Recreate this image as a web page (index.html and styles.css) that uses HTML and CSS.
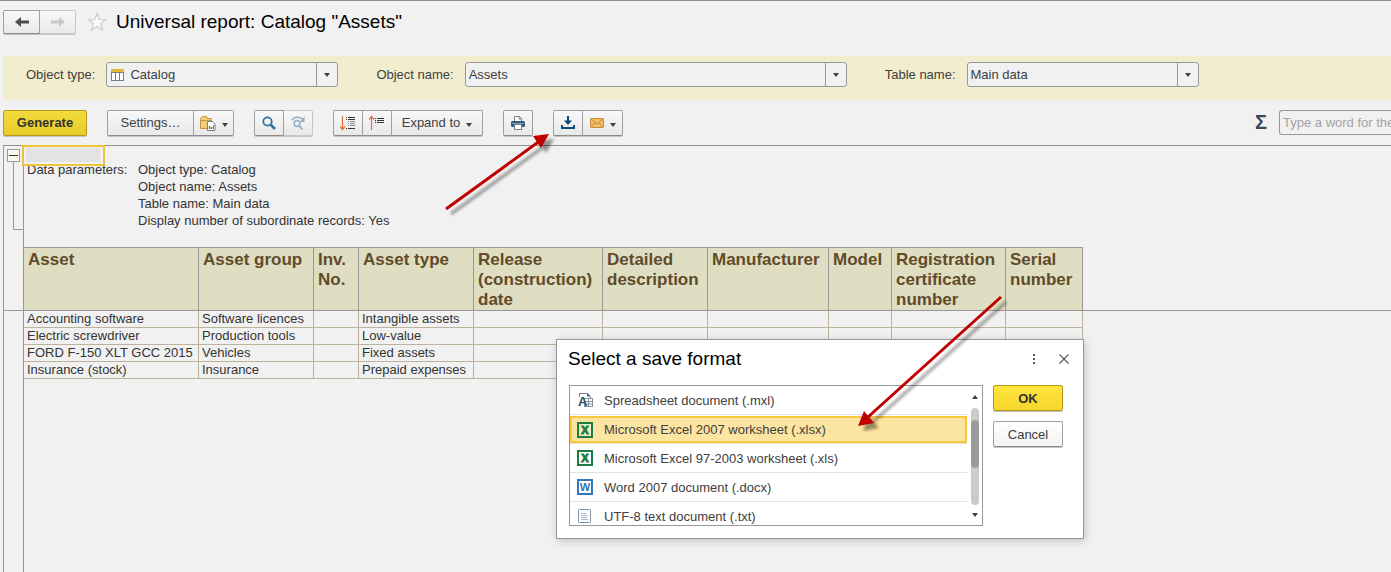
FILE: index.html
```html
<!DOCTYPE html>
<html lang="en">
<head>
    <meta charset="UTF-8">
    <meta name="viewport" content="width=device-width, initial-scale=1.0">
    <link rel="stylesheet" href="styles.css">
    <title>Universal report: Catalog "Assets"</title>
</head>
<body>
    <header class="title-bar">
        <div class="btn-group">
            <button class="btn nav-btn" type="button" aria-label="Back">
                <svg width="14" height="10" viewBox="0 0 14 10"><path d="M6 0v3.6h8v2.8H6V10L0 5z" fill="#4d4d4d"/></svg>
            </button>
            <button class="btn nav-btn" type="button" aria-label="Forward" disabled>
                <svg width="14" height="10" viewBox="0 0 14 10"><path d="M8 0v3.6H0v2.8h8V10l6-5z" fill="#c8c8c8"/></svg>
            </button>
        </div>
        <svg class="star" width="20" height="20" viewBox="0 0 20 20"><path d="M10 1.5l2.3 6.1 6.4.2-5.1 4 1.8 6.4-5.4-3.7-5.4 3.7 1.8-6.4-5.1-4 6.4-.2z" fill="#fafafa" stroke="#cfcfcf" stroke-width="1.3"/></svg>
        <h1>Universal report: Catalog "Assets"</h1>
    </header>

    <form class="filters">
        <div class="field">
            <label for="object-type">Object type:</label>
            <div class="combo has-icon">
                <select id="object-type"><option>Catalog</option></select>
                <svg class="combo-icon" width="13" height="12" viewBox="0 0 13 12">
                    <rect x=".5" y=".5" width="12" height="11" fill="#fff" stroke="#6f7f8c"/>
                    <rect x="0" y="0" width="13" height="3" fill="#e3b93c"/>
                    <path d="M4.5 3v9M8.5 3v9M0 3.500h13" stroke="#6f7f8c"/>
                </svg>
                <span class="combo-arrow"><i class="caret"></i></span>
            </div>
        </div>
        <div class="field">
            <label for="object-name">Object name:</label>
            <div class="combo wide">
                <select id="object-name"><option>Assets</option></select>
                <span class="combo-arrow"><i class="caret"></i></span>
            </div>
        </div>
        <div class="field">
            <label for="table-name">Table name:</label>
            <div class="combo">
                <select id="table-name"><option>Main data</option></select>
                <span class="combo-arrow"><i class="caret"></i></span>
            </div>
        </div>
    </form>

    <div class="toolbar">
        <button class="btn primary generate" type="button">Generate</button>
        <div class="btn-group">
            <button class="btn settings" type="button">Settings…</button>
            <button class="btn split" type="button" aria-label="Report variants">
                <svg width="17" height="16" viewBox="0 0 17 16">
                    <path d="M1.500 13.500v-10l2-2h4l1 2h4v10z" fill="#f0cc7c" stroke="#c8963c"/>
                    <path d="M1.500 5.500h11" stroke="#c8963c"/>
                    <path d="M8.500 6.500h5l2.500 2.500v6.500H8.500z" fill="#fff" stroke="#71808d"/>
                    <path d="M10.500 14v-3" stroke="#3a9b4a" stroke-width="1.500"/>
                    <path d="M12.500 14v-2" stroke="#d9482b" stroke-width="1.500"/>
                    <path d="M14.300 14v-4" stroke="#d9482b"/>
                </svg>
                <i class="caret"></i>
            </button>
        </div>
        <div class="btn-group">
            <button class="btn icon-btn" type="button" aria-label="Find">
                <svg width="14" height="14" viewBox="0 0 14 14"><circle cx="5.500" cy="5.500" r="4.200" fill="none" stroke="#31709f" stroke-width="1.800"/><path d="M8.500 8.500l4.500 4.500" stroke="#31709f" stroke-width="2.600"/></svg>
            </button>
            <button class="btn icon-btn" type="button" aria-label="Find next" disabled>
                <svg width="15" height="14" viewBox="0 0 15 14"><circle cx="6" cy="7.500" r="2.900" fill="none" stroke="#8fb0c6" stroke-width="1.500"/><path d="M8 9.500l3.500 4" stroke="#8fb0c6" stroke-width="1.800"/><path d="M1 4C3 .7 8.500.4 11 3" fill="none" stroke="#8fb0c6" stroke-width="1.600"/><path d="M13.500.5v5.500H8.500z" fill="#8fb0c6"/></svg>
            </button>
        </div>
        <div class="btn-group">
            <button class="btn icon-btn" type="button" aria-label="Expand groups">
                <svg width="16" height="16" viewBox="0 0 16 16"><path d="M2.500 1v13M0 11.500l2.500 3 2.500-3" fill="none" stroke="#e2703f" stroke-width="1.200"/><path d="M6 2.500h1M8 2.500h7M6 4.500h1M8 4.500h7M6 13.500h1M8 13.500h7" stroke="#333"/><path d="M8 6.500h1M10 6.500h5M8 8.500h1M10 8.500h5M8 10.500h1M10 10.500h5" stroke="#888"/></svg>
            </button>
            <button class="btn icon-btn" type="button" aria-label="Collapse groups">
                <svg width="16" height="16" viewBox="0 0 16 16"><path d="M2.500 15V2M0 4.500l2.500-3 2.500 3" fill="none" stroke="#e2703f" stroke-width="1.200"/><path d="M6 3.500h1M8 3.500h7M6 5.500h1M8 5.500h7M6 7.500h1M8 7.500h7" stroke="#333"/></svg>
            </button>
            <button class="btn expand" type="button">Expand to <i class="caret"></i></button>
        </div>
        <button class="btn icon-btn" type="button" aria-label="Print">
            <svg width="14" height="14" viewBox="0 0 14 14"><path d="M3.500 6V.5h5l2 2V6" fill="#fff" stroke="#71808d"/><path d="M8 .5v2.500h2.500" fill="none" stroke="#71808d"/><rect x="0" y="5" width="14" height="6" rx="1.500" fill="#33597c"/><path d="M1 7.500h12" stroke="#7fa0bd"/><rect x="3.500" y="8.500" width="7" height="5" fill="#fff" stroke="#71808d"/></svg>
        </button>
        <div class="btn-group">
            <button class="btn icon-btn" type="button" aria-label="Save">
                <svg width="14" height="13" viewBox="0 0 14 13"><path d="M7 0v6" stroke="#0b4b7c" stroke-width="2"/><path d="M3 4.500h8L7 9z" fill="#0b4b7c"/><path d="M1 9v3h12V9" fill="none" stroke="#0b4b7c" stroke-width="2"/></svg>
            </button>
            <button class="btn split" type="button" aria-label="Send">
                <svg width="14" height="10" viewBox="0 0 14 10"><rect x=".5" y=".5" width="13" height="9" rx="1" fill="#f2bf62" stroke="#c68a35"/><path d="M1 1l6 5 6-5M1 9l4.500-4.200M13 9L8.500 4.800" fill="none" stroke="#c68a35"/></svg>
                <i class="caret"></i>
            </button>
        </div>
        <div class="search">
            <label for="filter" aria-label="Totals">Σ</label>
            <input type="text" id="filter" placeholder="Type a word for the">
        </div>
    </div>

    <main class="sheet">
        <div class="gutter">
            <div class="gutter-head">
                <button class="collapse" type="button" aria-label="Collapse group"></button>
                <div class="bracket"></div>
            </div>
        </div>
        <div class="content">
            <div class="active-cell"></div>
            <dl class="params">
                <dt>Data parameters:</dt>
                <dd>Object type: Catalog</dd>
                <dd>Object name: Assets</dd>
                <dd>Table name: Main data</dd>
                <dd>Display number of subordinate records: Yes</dd>
            </dl>
            <div class="table-row">
                <table>
                    <colgroup>
                        <col class="w-asset"><col class="w-group"><col class="w-inv"><col class="w-type"><col class="w-release">
                        <col class="w-desc"><col class="w-maker"><col class="w-model"><col class="w-cert"><col class="w-serial">
                    </colgroup>
                    <thead>
                        <tr>
                            <th>Asset</th>
                            <th>Asset group</th>
                            <th>Inv. No.</th>
                            <th>Asset type</th>
                            <th>Release (construction) date</th>
                            <th>Detailed description</th>
                            <th>Manufacturer</th>
                            <th>Model</th>
                            <th>Registration certificate number</th>
                            <th>Serial number</th>
                        </tr>
                    </thead>
                    <tbody>
                        <tr><td>Accounting software</td><td>Software licences</td><td></td><td>Intangible assets</td><td></td><td></td><td></td><td></td><td></td><td></td></tr>
                        <tr><td>Electric screwdriver</td><td>Production tools</td><td></td><td>Low-value</td><td></td><td></td><td></td><td></td><td></td><td></td></tr>
                        <tr><td>FORD F-150 XLT GCC 2015</td><td>Vehicles</td><td></td><td>Fixed assets</td><td></td><td></td><td></td><td></td><td></td><td></td></tr>
                        <tr><td>Insurance (stock)</td><td>Insurance</td><td></td><td>Prepaid expenses</td><td></td><td></td><td></td><td></td><td></td><td></td></tr>
                    </tbody>
                </table>
                <div class="freeze-line"></div>
            </div>
        </div>
    </main>

    <div class="dialog" role="dialog" aria-labelledby="dialog-title">
        <div class="dialog-head">
            <h2 id="dialog-title">Select a save format</h2>
            <button class="plain" type="button" aria-label="More">
                <svg width="4" height="12" viewBox="0 0 4 12"><path d="M1 1h2v2H1zM1 5h2v2H1zM1 9h2v2H1z" fill="#555"/></svg>
            </button>
            <button class="plain" type="button" aria-label="Close">
                <svg width="10" height="10" viewBox="0 0 10 10"><path d="M.5.5l9 9M9.500.5l-9 9" stroke="#555" stroke-width="1.100"/></svg>
            </button>
        </div>
        <div class="dialog-body">
            <div class="list">
                <ul role="listbox" aria-labelledby="dialog-title">
                    <li role="option">
                        <svg width="16" height="16" viewBox="0 0 16 16"><path d="M2.500 5V1.500h8l3 3V6" fill="#fff" stroke="#71808d"/><path d="M10 1v3.500h3.500z" fill="#4d6880"/><rect x="7.500" y="6.500" width="8" height="8" fill="#fff" stroke="#8b8f93"/><path d="M7 9.500h8M7 12h8M11.500 7v8" stroke="#8b8f93"/><text x="1" y="14" class="mxl-letter">A</text></svg>
                        Spreadsheet document (.mxl)
                    </li>
                    <li role="option" class="selected" aria-selected="true">
                        <svg width="16" height="16" viewBox="0 0 16 16"><rect x="1" y="1" width="14" height="14" class="xls-box"/><text x="8" y="12" class="xls-letter">X</text></svg>
                        Microsoft Excel 2007 worksheet (.xlsx)
                    </li>
                    <li role="option">
                        <svg width="16" height="16" viewBox="0 0 16 16"><rect x="1" y="1" width="14" height="14" class="xls-box white"/><text x="8" y="12" class="xls-letter">X</text></svg>
                        Microsoft Excel 97-2003 worksheet (.xls)
                    </li>
                    <li role="option">
                        <svg width="16" height="16" viewBox="0 0 16 16"><rect x="1" y="1" width="14" height="14" class="doc-box"/><text x="8" y="12" class="doc-letter">W</text></svg>
                        Word 2007 document (.docx)
                    </li>
                    <li role="option">
                        <svg width="16" height="16" viewBox="0 0 16 16"><rect x="1.500" y="1.500" width="12" height="13" rx="1" fill="#fff" stroke="#7e92a3"/><path d="M4 5.500h5M4 7.500h7M4 9.500h6M4 11.500h7" stroke="#a9b4be"/></svg>
                        UTF-8 text document (.txt)
                    </li>
                </ul>
                <div class="scroll">
                    <i class="caret up"></i>
                    <div class="track"><div class="thumb"></div></div>
                    <i class="caret"></i>
                </div>
            </div>
            <div class="dialog-buttons">
                <button class="btn primary" type="button">OK</button>
                <button class="btn" type="button">Cancel</button>
            </div>
        </div>
    </div>

    <!-- pointer arrows -->
    <svg class="pointers" width="1100" height="572" viewBox="0 0 1100 572" aria-hidden="true">
        <defs>
            <filter id="soft" x="-20%" y="-20%" width="140%" height="140%"><feGaussianBlur stdDeviation="1.500"/></filter>
            <g id="arrow-save">
                <path d="M446 209L539 141.500" fill="none" stroke-width="3"/>
                <path d="M549 134L533 136l8 12z" stroke="none"/>
            </g>
            <g id="arrow-format">
                <path d="M1001 297L868 417" fill="none" stroke-width="3"/>
                <path d="M858 426L864 411l10 12z" stroke="none"/>
            </g>
        </defs>
        <g class="shade" filter="url(#soft)">
            <use href="#arrow-save"/>
            <use href="#arrow-format"/>
        </g>
        <g class="red">
            <use href="#arrow-save"/>
            <use href="#arrow-format"/>
        </g>
    </svg>
</body>
</html>
```
FILE: styles.css
```css
* {
    box-sizing: border-box;
}

body {
    display: flex;
    flex-direction: column;
    position: relative;
    min-height: 100vh;
    margin: 0;
    padding-left: 3px;
    border-top: 1px solid #8f8f8f;
    overflow: hidden;
    background-color: #f1f1f1;
    color: #404040;
    font-family: "Liberation Sans", Arial, sans-serif;
    font-size: 13px;
    line-height: 17px;
}

h1, h2 {
    margin: 0;
    color: #000;
    font-size: 19px;
    font-weight: normal;
    line-height: 22px;
}

button, select, input {
    font: inherit;
    color: inherit;
}

svg {
    flex: none;
}

/* title */
.title-bar {
    display: flex;
    align-items: center;
    height: 55px;
    padding-bottom: 13px;
}

.star {
    margin: 0 9px 0 11px;
}

/* buttons */
.btn {
    display: flex;
    align-items: center;
    justify-content: center;
    gap: 6px;
    height: 26px;
    padding: 0;
    border: 1px solid #a0a0a0;
    border-bottom-color: #8a8a8a;
    border-radius: 2px;
    background: linear-gradient(#f8f8f8, #e9e9e9);
    box-shadow: 0 1px 0 #c4c4c4;
}

.btn:disabled {
    border-color: #c6c6c6;
}

.btn-group {
    display: flex;
}

.btn-group .btn + .btn {
    margin-left: -1px;
    border-top-left-radius: 0;
    border-bottom-left-radius: 0;
}

.btn-group .btn:not(:last-child) {
    position: relative;
    border-top-right-radius: 0;
    border-bottom-right-radius: 0;
}

.btn.primary {
    border-color: #b59b14;
    background: linear-gradient(#f3db3c, #e9cb2c);
    color: #333;
    font-weight: bold;
}

.btn.nav-btn {
    width: 37px;
    height: 24px;
}

.generate {
    width: 84px;
}

.settings {
    width: 87px;
}

.split {
    width: 41px;
}

.icon-btn {
    width: 30px;
}

.expand {
    width: 92px;
}

.caret {
    border: 3px solid transparent;
    border-top: 4px solid #404040;
    border-bottom: 0;
}

.btn .caret {
    margin-top: 4px;
}

.caret.up {
    border-top: 0;
    border-bottom: 4px solid #404040;
}

/* filters */
.filters {
    display: flex;
    gap: 38px;
    height: 44px;
    padding: 6px 23px;
    background-color: #f2edcf;
}

.field {
    display: flex;
    align-items: center;
    gap: 11px;
    height: 25px;
    white-space: nowrap;
}

.combo {
    position: relative;
    width: 232px;
}

.combo.wide {
    width: 382px;
}

.combo select {
    display: block;
    width: 100%;
    height: 25px;
    padding: 0 24px 0 3px;
    border: 1px solid #989898;
    border-radius: 3px;
    background-color: #f1f1f1;
    appearance: none;
}

.combo.has-icon select {
    padding-left: 23px;
}

.combo-icon {
    position: absolute;
    top: 7px;
    left: 5px;
}

.combo-arrow {
    position: absolute;
    top: 1px;
    right: 1px;
    bottom: 1px;
    display: flex;
    align-items: center;
    justify-content: center;
    width: 21px;
    border-left: 1px solid #989898;
    pointer-events: none;
}

/* toolbar */
.toolbar {
    display: flex;
    align-items: center;
    gap: 20px;
    height: 45px;
}

.search {
    display: flex;
    align-items: center;
    gap: 12px;
    margin-left: auto;
}

.search label {
    color: #34495a;
    font-size: 20px;
    font-weight: bold;
}

.search input {
    width: 112px;
    height: 25px;
    padding: 0 0 0 3px;
    border: 1px solid #989898;
    border-right: 0;
    border-radius: 3px 0 0 3px;
    background-color: #f1f1f1;
}

.search input::placeholder {
    color: #a3a3a3;
}

/* sheet */
.sheet {
    display: flex;
    flex: 1;
    border-top: 1px solid #8f8f8f;
    border-left: 1px solid #989898;
    color: #333;
}

.gutter {
    width: 19px;
}

.gutter-head {
    height: 165px;
    padding: 3px 0 0 3px;
    border-bottom: 1px solid #989898;
}

.collapse {
    display: flex;
    align-items: center;
    justify-content: center;
    width: 13px;
    height: 13px;
    padding: 0;
    border: 1px solid #999;
    background-color: #fbf9ec;
}

.collapse::before {
    content: "";
    width: 9px;
    height: 1px;
    background-color: #333;
}

.bracket {
    height: 68px;
    margin-left: 6px;
    border-left: 1px solid #989898;
    border-bottom: 1px solid #989898;
}

.content {
    position: relative;
    flex: 1;
    min-width: 0;
    padding-top: 15px;
    border-left: 1px solid #989898;
}

.active-cell {
    position: absolute;
    top: -1px;
    left: -2px;
    width: 83px;
    height: 21px;
    padding: 1px 3px 2px 2px;
    border: 2px solid #edc33c;
    background: linear-gradient(#e3e3e3, #e3e3e3) content-box, #f1f1f1;
}

.params {
    display: grid;
    grid-template-columns: 111px auto;
    margin: 0 3px 18px;
}

.params dd {
    grid-column: 2;
    margin: 0;
}

.params dt {
    grid-row: 1;
}

.table-row {
    display: flex;
}

.freeze-line {
    flex: 1;
    height: 64px;
    border-bottom: 1px solid #989898;
}

table {
    flex: none;
    width: 1059px;
    table-layout: fixed;
    border-collapse: separate;
    border-spacing: 0;
}

th {
    height: 64px;
    padding: 2px 4px 0;
    border: 1px solid #989898;
    border-left: 0;
    background-color: #dfdec3;
    color: #614b29;
    font-size: 17px;
    line-height: 20px;
    text-align: left;
    vertical-align: top;
}

td {
    height: 17px;
    padding: 0 3px;
    border-right: 1px solid #bdb29d;
    border-bottom: 1px solid #bdb29d;
    line-height: 16px;
    white-space: nowrap;
}

.w-asset { width: 175px; }
.w-group { width: 115px; }
.w-inv { width: 45px; }
.w-type { width: 115px; }
.w-release { width: 129px; }
.w-desc { width: 105px; }
.w-maker { width: 121px; }
.w-model { width: 63px; }
.w-cert { width: 114px; }
.w-serial { width: 77px; }

/* save dialog */
.dialog {
    position: absolute;
    top: 338px;
    left: 556px;
    width: 528px;
    padding: 8px 20px 12px 12px;
    border: 1px solid #989898;
    background-color: #fff;
    box-shadow: 1px 2px 8px rgba(0, 0, 0, 0.2);
}

.dialog-head {
    display: flex;
    align-items: center;
    gap: 10px;
    height: 22px;
    margin: 0 -11px 15px -1px;
}

.dialog-head h2 {
    flex: 1;
}

.plain {
    display: flex;
    align-items: center;
    justify-content: center;
    width: 20px;
    height: 20px;
    padding: 0;
    border: 0;
    background: none;
}

.dialog-body {
    display: flex;
    gap: 10px;
}

.list {
    display: flex;
    flex: 1;
    height: 141px;
    border: 1px solid #989898;
    overflow: hidden;
}

.list ul {
    flex: 1;
    margin: 0;
    padding: 0;
    list-style: none;
}

.list li {
    display: flex;
    align-items: center;
    gap: 11px;
    height: 29px;
    padding-left: 7px;
    border-bottom: 1px solid #e2e2e2;
}

.list li.selected {
    height: 27px;
    margin: 1px 0;
    padding-left: 5px;
    border: 2px solid #f8c73a;
    background-color: #fce5a0;
    box-shadow: 0 1px 0 #e2e2e2;
}

.scroll {
    display: flex;
    flex-direction: column;
    align-items: center;
    justify-content: space-between;
    width: 15px;
    padding: 9px 0 8px;
}

.track {
    width: 8px;
    height: 97px;
    padding-top: 12px;
    border-radius: 4px;
    background-color: #cbcbcb;
}

.thumb {
    height: 48px;
    border-radius: 4px;
    background-color: #9c9c9c;
}

.dialog-buttons {
    display: flex;
    flex-direction: column;
    gap: 10px;
    width: 70px;
}

.dialog-buttons .btn {
    background: linear-gradient(#fff, #f3f3f3);
}

.dialog-buttons .primary {
    background: linear-gradient(#ffe53f, #f5d62c);
}

.mxl-letter {
    fill: #2f4d66;
    font-size: 13px;
    font-weight: bold;
}

.xls-box {
    fill: #e9efc0;
    stroke: #1d7c43;
    stroke-width: 2px;
}

.xls-box.white {
    fill: #fff;
}

.xls-letter {
    fill: #1d7c43;
    stroke: #1d7c43;
    stroke-width: 1px;
    font-size: 11px;
    font-weight: bold;
    text-anchor: middle;
}

.doc-box {
    fill: #fff;
    stroke: #2f76bd;
    stroke-width: 2px;
}

.doc-letter {
    fill: #2f76bd;
    font-size: 11px;
    font-weight: bold;
    text-anchor: middle;
}

.pointers {
    position: absolute;
    top: -1px;
    left: 0;
    pointer-events: none;
}

.pointers .red {
    fill: #c00000;
    stroke: #c00000;
}

.pointers .shade {
    fill: #000;
    stroke: #000;
    opacity: 0.4;
    transform: translate(5px, 5px);
}
```
